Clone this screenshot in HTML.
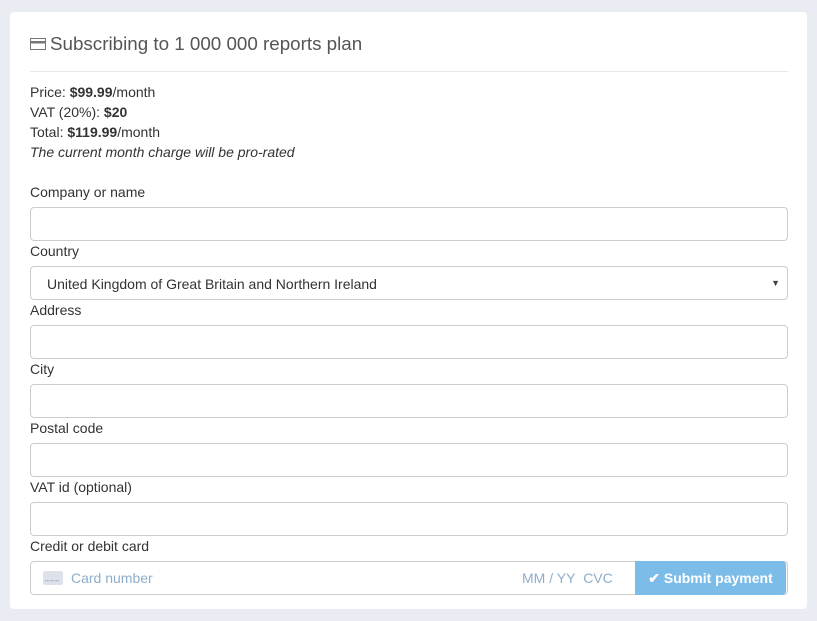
<!DOCTYPE html>
<html><head><meta charset="utf-8"><style>
*{box-sizing:border-box;margin:0;padding:0}
body{width:817px;height:621px;background:#e9ecf3;font-family:"Liberation Sans",sans-serif;color:#333;font-size:14px;position:relative;overflow:hidden}
.card{position:absolute;left:10px;top:12px;width:797px;height:597px;background:#fff;border-radius:4px}
.a{position:absolute;left:30px;white-space:nowrap}
.h{top:33px;font-size:18.8px;color:#555}
.hr{position:absolute;left:30px;top:71px;width:758px;height:1px;background:#e8e8e8}
.inp{position:absolute;left:30px;width:758px;height:34px;border:1px solid #ccc;border-radius:4px;background:#fff}
.lbl{font-size:14px;color:#333}
</style></head><body>
<div class="card"></div>
<div class="a h"><svg width="16" height="12" style="vertical-align:0px;margin-right:4px" viewBox="0 0 16 12"><rect x="0.5" y="0.5" width="15" height="11" fill="#fff" stroke="#777"/><rect x="1" y="3" width="14" height="2.5" fill="#777"/></svg>Subscribing to 1 000 000 reports plan</div>
<div class="hr"></div>
<div class="a" style="top:84px">Price: <b>$99.99</b>/month</div>
<div class="a" style="top:104px">VAT (20%): <b>$20</b></div>
<div class="a" style="top:124px">Total: <b>$119.99</b>/month</div>
<div class="a" style="top:144px"><i>The current month charge will be pro-rated</i></div>

<div class="a lbl" style="top:184px">Company or name</div>
<div class="inp" style="top:207px"></div>
<div class="a lbl" style="top:243px">Country</div>
<div class="inp" style="top:266px"><span style="position:absolute;left:16px;top:9px">United Kingdom of Great Britain and Northern Ireland</span><span style="position:absolute;right:7px;top:11px;font-size:9px;color:#444">▼</span></div>
<div class="a lbl" style="top:302px">Address</div>
<div class="inp" style="top:325px"></div>
<div class="a lbl" style="top:361px">City</div>
<div class="inp" style="top:384px"></div>
<div class="a lbl" style="top:420px">Postal code</div>
<div class="inp" style="top:443px"></div>
<div class="a lbl" style="top:479px">VAT id (optional)</div>
<div class="inp" style="top:502px"></div>
<div class="a lbl" style="top:538px">Credit or debit card</div>
<div class="inp" style="top:561px;width:758px;border-radius:4px">
<svg style="position:absolute;left:12px;top:9px" width="20" height="14" viewBox="0 0 20 14"><rect width="20" height="14" rx="2" fill="#dde1ea"/><rect x="2" y="9" width="4" height="1.3" fill="#b8bfcc"/><rect x="7" y="9" width="4" height="1.3" fill="#b8bfcc"/><rect x="12" y="9" width="4" height="1.3" fill="#b8bfcc"/></svg>
<span style="position:absolute;left:40px;top:8px;color:#8fadc9">Card number</span>
<span style="position:absolute;left:491px;top:8px;color:#8fadc9">MM / YY&nbsp; CVC</span>
</div>
<div style="position:absolute;left:635px;top:561px;width:151px;height:34px;background:#7cbce9;border-radius:0 4px 4px 0;color:#fff;font-size:14px;font-weight:bold;line-height:34px;text-align:center">✔ Submit payment</div>
</body></html>
